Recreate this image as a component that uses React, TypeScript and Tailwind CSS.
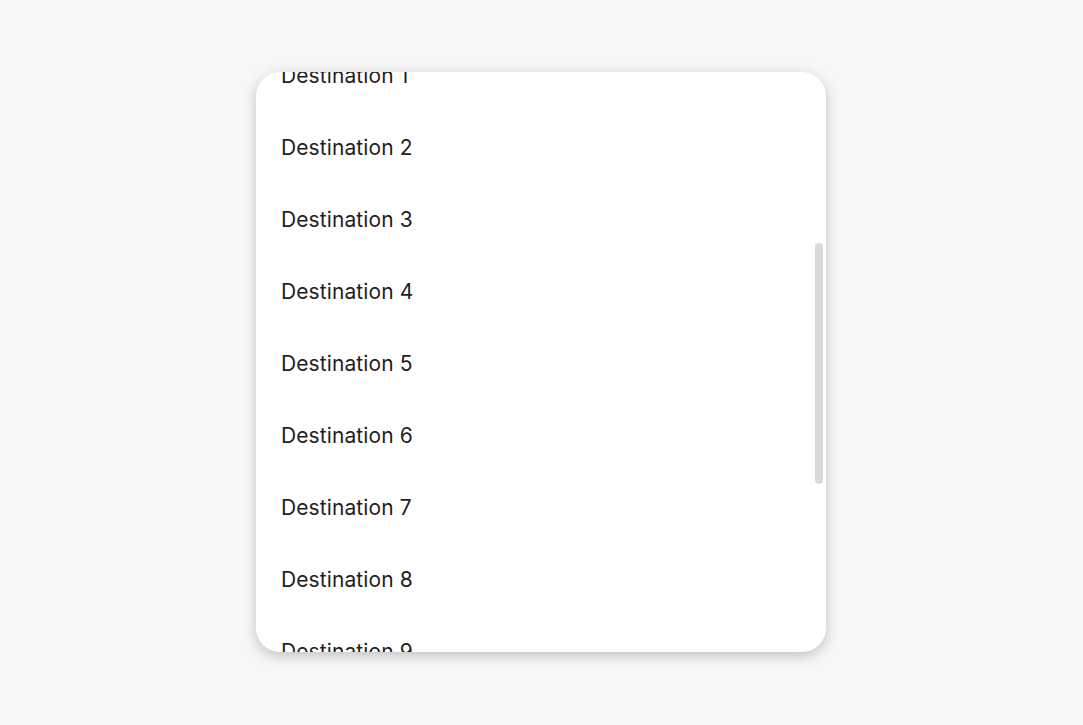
import React from 'react';

const items = Array.from({ length: 12 }, (_, i) => `Destination ${i + 1}`);

export default function App() {
  return (
    <div className="min-h-screen w-full bg-[#f7f7f7] flex pl-[256px] pt-[72px]" style={{ fontFamily: 'Inter, "Noto Sans", sans-serif' }}>
      <div className="relative w-[570px] h-[580px] rounded-[24px] bg-white overflow-hidden shadow-[0_4px_14px_rgba(0,0,0,0.22)]">
        <ul className="-mt-[32px]">
          {items.map((name) => (
            <li key={name} className="h-[72px] flex items-center pl-[25px] text-[21px] tracking-[0.1px] text-[#1f1f1f]">
              {name}
            </li>
          ))}
        </ul>
        <div className="absolute right-[3px] top-[171px] w-[8px] h-[241px] rounded-full bg-[#dadada]" />
      </div>
    </div>
  );
}
